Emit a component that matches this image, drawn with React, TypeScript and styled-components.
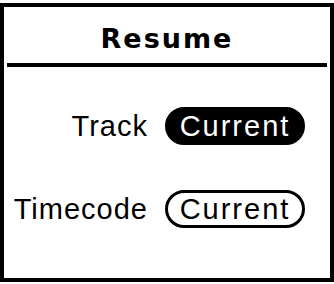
import styled, { createGlobalStyle } from 'styled-components';

const GlobalStyle = createGlobalStyle`
  html, body {
    margin: 0;
    padding: 0;
    background: #ffffff;
  }
  body {
    font-family: 'Liberation Sans', Arial, sans-serif;
    color: #000000;
  }
`;

type Option = {
  label: string;
  value: string;
  selected?: boolean;
};

const options: Option[] = [
  { label: 'Track', value: 'Current', selected: true },
  { label: 'Timecode', value: 'Current' },
];

export default function App() {
  return (
    <>
      <GlobalStyle />
      <Screen>
        <Title>Resume</Title>
        <Divider />
        <Settings>
          {options.map((opt) => (
            <Row key={opt.label}>
              <Label>{opt.label}</Label>
              <Pill $selected={opt.selected}>{opt.value}</Pill>
            </Row>
          ))}
        </Settings>
      </Screen>
    </>
  );
}

const Screen = styled.div`
  box-sizing: border-box;
  width: 334px;
  height: 279px;
  margin-top: 3px;
  border: 4px solid #000;
  display: flex;
  flex-direction: column;
`;

const Title = styled.div`
  margin-top: 18px;
  font-family: 'DejaVu Sans', 'Liberation Sans', sans-serif;
  font-weight: bold;
  font-size: 27px;
  line-height: 27px;
  letter-spacing: 2px;
  text-align: center;
`;

const Divider = styled.div`
  height: 4px;
  margin: 11px 3px 0;
  background: #000;
`;

const Settings = styled.div`
  display: flex;
  flex-direction: column;
  gap: 45px;
  margin-top: 40px;
  padding-right: 25px;
`;

const Row = styled.div`
  display: grid;
  grid-template-columns: 1fr 140px;
  column-gap: 17px;
  align-items: center;
`;

const Label = styled.span`
  text-align: right;
  font-size: 29px;
  letter-spacing: 1px;
  line-height: 1;
`;

const Pill = styled.span<{ $selected?: boolean }>`
  box-sizing: border-box;
  height: 38px;
  border-radius: 19px;
  border: 3px solid #000;
  background: ${(p) => (p.$selected ? '#000' : '#fff')};
  color: ${(p) => (p.$selected ? '#fff' : '#000')};
  display: flex;
  align-items: center;
  justify-content: center;
  font-size: 29px;
  letter-spacing: 2px;
  line-height: 1;
`;
